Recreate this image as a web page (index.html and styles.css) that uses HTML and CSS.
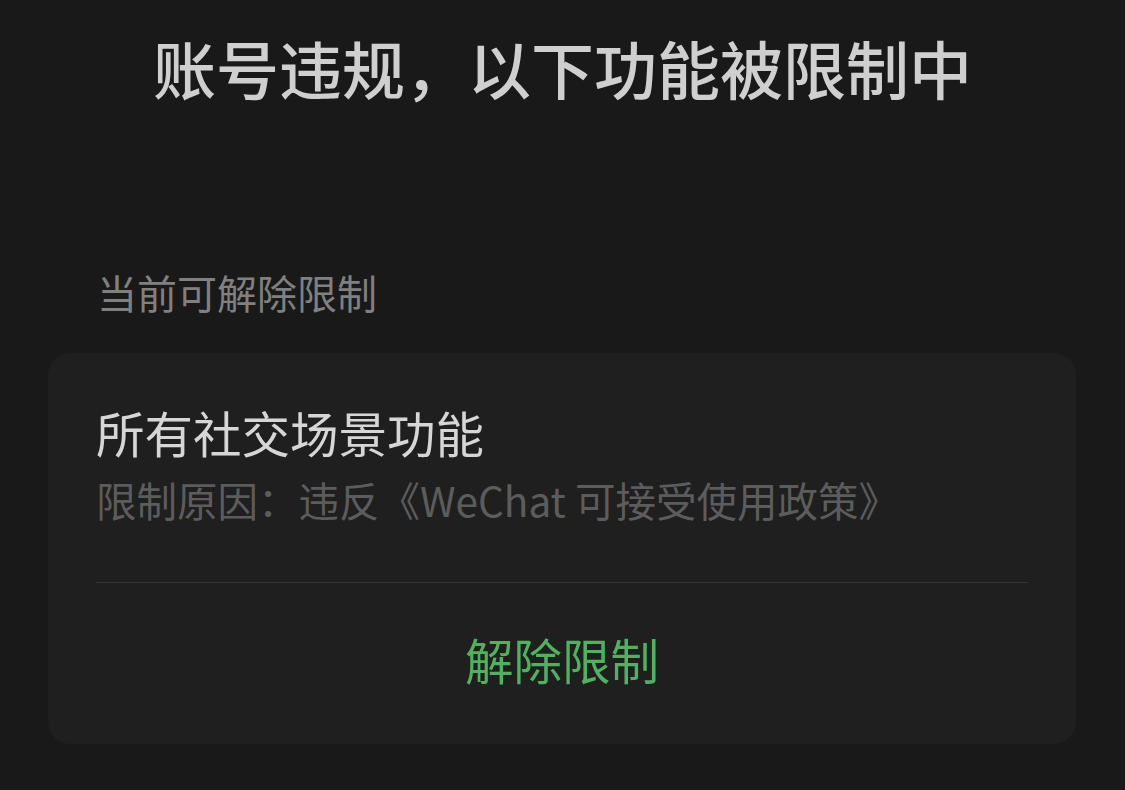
FILE: index.html
```html
<!DOCTYPE html>
<html lang="zh-CN">
<head>
<meta charset="utf-8">
<link rel="stylesheet" href="styles.css">
</head>
<body>
<div class="page">
  <h1 class="title">账号违规，以下功能被限制中</h1>
  <div class="section-label">当前可解除限制</div>
  <div class="card">
    <div class="card-body">
      <div class="item-title">所有社交场景功能</div>
      <div class="item-reason">限制原因：违反《WeChat 可接受使用政策》</div>
    </div>
    <div class="divider"></div>
    <div class="action">解除限制</div>
  </div>
</div>
</body>
</html>
```
FILE: styles.css
```css
html, body {
  margin: 0;
  padding: 0;
  background: #191919;
}
body {
  font-family: "Noto Sans CJK SC", "Noto Sans", sans-serif;
  width: 1125px;
  height: 790px;
  overflow: hidden;
}
.page {
  display: flex;
  flex-direction: column;
}
.title {
  margin: 23px 0 0;
  font-size: 63px;
  line-height: 88px;
  font-weight: 500;
  color: #cfcfcf;
  text-align: center;
  letter-spacing: 0;
}
.section-label {
  margin: 154px 0 0 97px;
  font-size: 40px;
  line-height: 54px;
  color: #808080;
}
.card {
  margin: 34px 49px 0 48px;
  background: #1f1f1f;
  border-radius: 22px;
  display: flex;
  flex-direction: column;
  height: 391px;
}
.card-body {
  padding: 46px 48px 0;
}
.item-title {
  font-size: 48.5px;
  line-height: 66px;
  color: #d6d6d6;
}
.item-reason {
  margin-top: 7px;
  font-size: 40.5px;
  line-height: 56px;
  color: #5c5c5c;
}
.divider {
  margin: 54px 48px 0;
  height: 1px;
  background: #353535;
}
.action {
  flex: 1;
  display: flex;
  align-items: center;
  justify-content: center;
  padding-bottom: 10px;
  font-size: 48.5px;
  color: #4db35e;
}
```
